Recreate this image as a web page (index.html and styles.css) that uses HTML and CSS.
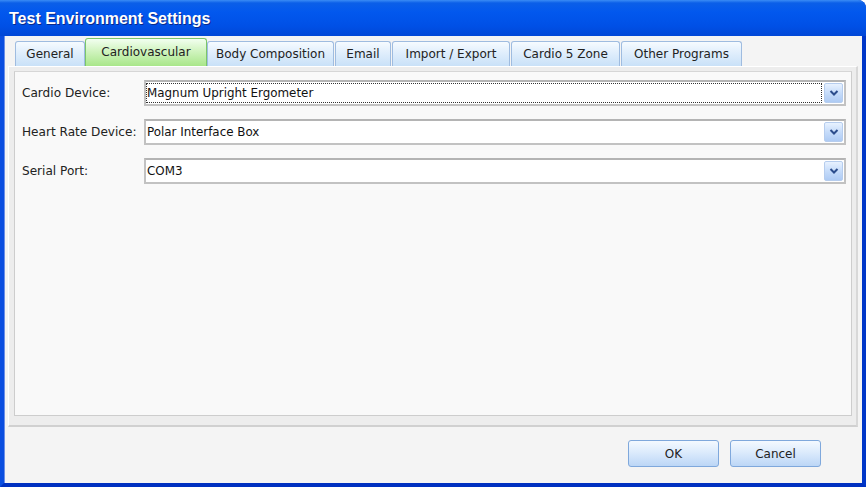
FILE: index.html
```html
<!DOCTYPE html>
<html>
<head>
<meta charset="utf-8">
<link rel="stylesheet" href="styles.css">
</head>
<body>
<div class="window">
  <div class="titlebar">Test Environment Settings</div>
  <div class="client">
    <div class="tabs">
      <div class="tab t-general">General</div>
      <div class="tab active t-cardio">Cardiovascular</div>
      <div class="tab t-body">Body Composition</div>
      <div class="tab t-email">Email</div>
      <div class="tab t-import">Import / Export</div>
      <div class="tab t-zone">Cardio 5 Zone</div>
      <div class="tab t-other">Other Programs</div>
    </div>
    <div class="panel-outer">
      <div class="panel-inner">
        <div class="row">
          <div class="label">Cardio Device:</div>
          <div class="combo"><div class="value focus">Magnum Upright Ergometer</div><div class="arrow"><svg width="10" height="6" viewBox="0 0 10 6"><path d="M1.5 1 L5 4.5 L8.5 1" fill="none" stroke="#2c4d8c" stroke-width="2"/></svg></div></div>
        </div>
        <div class="row">
          <div class="label">Heart Rate Device:</div>
          <div class="combo"><div class="value">Polar Interface Box</div><div class="arrow"><svg width="10" height="6" viewBox="0 0 10 6"><path d="M1.5 1 L5 4.5 L8.5 1" fill="none" stroke="#2c4d8c" stroke-width="2"/></svg></div></div>
        </div>
        <div class="row">
          <div class="label">Serial Port:</div>
          <div class="combo"><div class="value">COM3</div><div class="arrow"><svg width="10" height="6" viewBox="0 0 10 6"><path d="M1.5 1 L5 4.5 L8.5 1" fill="none" stroke="#2c4d8c" stroke-width="2"/></svg></div></div>
        </div>
      </div>
    </div>
    <div class="buttons">
      <div class="btn">OK</div>
      <div class="btn">Cancel</div>
    </div>
  </div>
</div>
</body>
</html>
```
FILE: styles.css
```css
html, body { margin: 0; padding: 0; }
body {
  width: 866px; height: 487px; overflow: hidden;
  font-family: "DejaVu Sans", "Liberation Sans", sans-serif;
  font-size: 12px; color: #222;
}
.window {
  width: 866px; height: 487px; box-sizing: border-box;
  background: #0a46d8;
  display: flex; flex-direction: column;
  border-left: 4px solid #0a4ee0; border-right: 4px solid #0036c8; border-bottom: 4px solid #0030c0;
  border-top-right-radius: 8px;
}
.titlebar {
  height: 36px; box-sizing: border-box;
  margin: 0 -4px;
  padding: 10px 0 0 9px;
  background: linear-gradient(to bottom, #3a8cf5 0px, #0b5fe8 3px, #0258ee 12px, #0050e6 26px, #0147d6 36px);
  border-top-right-radius: 8px;
  color: #fff; font-weight: bold; font-size: 16px;
  font-family: "Liberation Sans", "DejaVu Sans", sans-serif;
  text-shadow: 1px 1px 0 #0a2a8a;
}
.client {
  flex: 1; background: #f4f4f4;
  display: flex; flex-direction: column;
  border-left: 1px solid #6b8fe8;
}
.tabs {
  display: flex; align-items: flex-end;
  padding: 0 0 0 10px; height: 30px; box-sizing: border-box;
}
.tab {
  height: 25px; box-sizing: border-box;
  padding-top: 5px; text-align: center;
  border: 1px solid #9fbce0; border-bottom: none;
  border-radius: 3px 3px 0 0;
  background: linear-gradient(to bottom, #f6fbff 0%, #e0eefc 45%, #c9e1f8 100%);
  color: #222; white-space: nowrap;
  margin-right: 1px;
}
.tab.active {
  height: 28px; padding-top: 6px;
  border-color: #7cc66a;
  background: linear-gradient(to bottom, #f2fff0 0%, #d4f5c4 40%, #a8e689 100%);
}
.t-general { width: 70px; margin-right: 0; }
.t-cardio { width: 122px; margin-right: 0; }
.t-body { width: 127px; }
.t-email { width: 56px; }
.t-import { width: 118px; }
.t-zone { width: 109px; }
.t-other { width: 121px; }
.panel-outer {
  margin: 0 4px 0 3px; height: 361px; box-sizing: border-box;
  background: #ededed;
  border: 1px solid #fff; border-bottom: 2px solid #d0d0d0; border-right: 2px solid #d8d8d8;
  padding: 4px 4px 9px 5px;
}
.panel-inner {
  height: 100%; box-sizing: border-box;
  background: #f9f9f9;
  border: 1px solid #cdcdcd; border-top-color: #d6d6d6;
  padding: 8px 5px 0 7px;
  display: flex; flex-direction: column; gap: 13px;
}
.row { display: flex; align-items: center; }
.label { width: 122px; flex: none; font-size: 12.1px; }
.combo {
  flex: 1; height: 26px; box-sizing: border-box;
  border: 2px solid #c2c2c2; border-top-color: #b4b4b4;
  background: #fff;
  display: flex; align-items: center; padding: 0 1px 0 0;
}
.value {
  flex: 1; height: 20px; box-sizing: border-box; line-height: 18px;
  padding-left: 0; font-size: 11.9px; color: #111;
  border: 1px solid transparent; margin-right: 2px;
}
.value.focus { border: 1px dotted #333; }
.arrow {
  width: 19px; height: 20px; box-sizing: border-box;
  border: 1px solid #b6cdee; border-radius: 2px;
  background: linear-gradient(to bottom, #e8f2ff 0%, #c6dcfa 50%, #aecbf4 100%);
  display: flex; align-items: center; justify-content: center;
}
.buttons {
  display: flex; justify-content: flex-end; gap: 11px;
  padding: 13px 41px 0 0;
}
.btn {
  width: 91px; height: 27px; box-sizing: border-box;
  border: 1px solid #7fa8dc; border-radius: 3px;
  background: linear-gradient(to bottom, #f4f9ff 0%, #dcebfc 45%, #bcd6f6 100%);
  display: flex; align-items: center; justify-content: center;
  font-size: 12px; color: #222;
}
```
